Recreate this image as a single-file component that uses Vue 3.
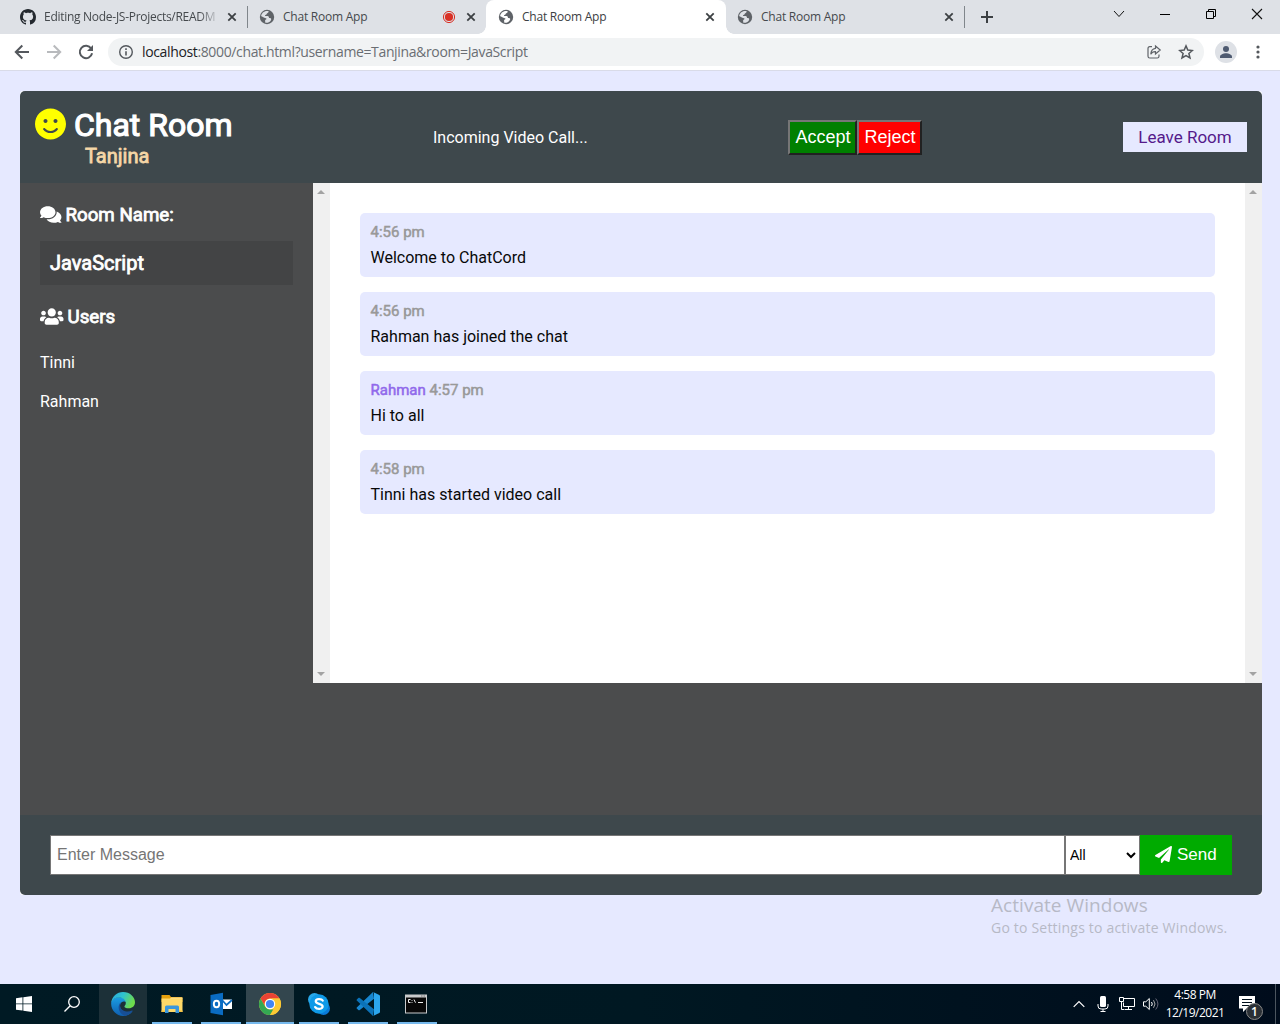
<script setup>
const tabs = [
  { title: 'Editing Node-JS-Projects/READM', icon: 'github', width: 248, cut: true },
  { title: 'Chat Room App', icon: 'globe', recording: true, width: 238 },
  { title: 'Chat Room App', icon: 'globe', active: true, width: 240 },
  { title: 'Chat Room App', icon: 'globe', width: 239 },
]
const messages = [
  { time: '4:56 pm', text: 'Welcome to ChatCord' },
  { time: '4:56 pm', text: 'Rahman has joined the chat' },
  { user: 'Rahman', time: '4:57 pm', text: 'Hi to all' },
  { time: '4:58 pm', text: 'Tinni has started video call' },
]
const users = ['Tinni', 'Rahman']
const apps = ['edge', 'files', 'outlook', 'chrome', 'skype', 'code', 'cmd']
</script>

<template>
  <div class="screen">
    <div class="tabstrip">
      <div class="tabs">
        <div v-for="(t, i) in tabs" :key="i" class="tab" :class="{ active: t.active, first: i === 0, sep: i === 0 || i === 3 }" :style="{ width: t.width + 'px' }">
          <svg v-if="t.icon === 'github'" class="favicon" viewBox="0 0 16 16"><path fill="#24292f" d="M8 0C3.58 0 0 3.58 0 8c0 3.54 2.29 6.53 5.47 7.59.4.07.55-.17.55-.38 0-.19-.01-.82-.01-1.49-2.01.37-2.53-.49-2.69-.94-.09-.23-.48-.94-.82-1.13-.28-.15-.68-.52-.01-.53.63-.01 1.08.58 1.23.82.72 1.21 1.87.87 2.33.66.07-.52.28-.87.51-1.07-1.78-.2-3.64-.89-3.64-3.95 0-.87.31-1.59.82-2.15-.08-.2-.36-1.02.08-2.12 0 0 .67-.21 2.2.82.64-.18 1.32-.27 2-.27s1.36.09 2 .27c1.53-1.04 2.2-.82 2.2-.82.44 1.1.16 1.92.08 2.12.51.56.82 1.27.82 2.15 0 3.07-1.87 3.75-3.65 3.95.29.25.54.73.54 1.48 0 1.07-.01 1.93-.01 2.2 0 .21.15.46.55.38A8.01 8.01 0 0 0 16 8c0-4.42-3.58-8-8-8z"/></svg>
          <svg v-else class="favicon" viewBox="0 0 16 16"><circle cx="8" cy="8" r="7.2" fill="#5f6368"/><path :fill="t.active ? '#fff' : '#dee1e6'" d="M9.4 2.1C10 3 9.3 4 8.3 4.2c-.6.1-.5.9-.9 1.3-.6.5-1.5.3-1.4 1 .1.8 1.400.5 2.600.6 1.200.1 1.400 1 1.400 1.900 1 .2 2.100-.1 2.200.9.1 1.100-.8 2.300-2 3-1.500.9-3 1.100-4 .7.1-1-.2-1.600-.1-2.300.1-.8 1.500-.7 1.400-1.600C7.300 8.700 5 9 3.800 7.900 3 7.200 2.600 7.200 2.100 7.300 2.400 4.300 5.100 1.500 9.400 2.100z"/></svg>
          <span class="tab-title" :class="{ cut: t.cut }">{{ t.title }}</span>
          <svg v-if="t.recording" class="rec" viewBox="0 0 14 14"><circle cx="7" cy="7" r="5.6" fill="none" stroke="#d93025"/><circle cx="7" cy="7" r="4.100" fill="#d93025"/></svg>
          <svg class="tab-close" viewBox="0 0 10 10"><path d="M1.300 1.300l7.400 7.400M8.700 1.300L1.300 8.700" stroke="#3c4043" stroke-width="1.800"/></svg>
        </div>
        <svg class="plus" viewBox="0 0 12 12"><path d="M6 0v12M0 6h12" stroke="#3c4043" stroke-width="2"/></svg>
      </div>
      <div class="win">
        <svg viewBox="0 0 12 12"><path d="M1 3l5 5.500L11 3" fill="none" stroke="#111"/></svg>
        <svg viewBox="0 0 12 12"><path d="M1 6.500h10" stroke="#000"/></svg>
        <svg viewBox="0 0 12 12"><path d="M1.500 3.500h7v7h-7zM3.500 3.500v-2h7v7h-2" fill="none" stroke="#000"/></svg>
        <svg viewBox="0 0 12 12"><path d="M1 1l10 10M11 1L1 11" stroke="#111" stroke-width="1.100"/></svg>
      </div>
    </div>

    <div class="toolbar">
      <svg class="nav" viewBox="0 0 16 16" fill="none" stroke="#54585d" stroke-width="2"><path d="M15 8H2M8.300 1.500L1.800 8l6.500 6.500"/></svg>
      <svg class="nav" viewBox="0 0 16 16" fill="none" stroke="#b8babd" stroke-width="2"><path d="M1 8h13M7.700 1.500L14.200 8l-6.500 6.500"/></svg>
      <svg class="nav" viewBox="0 0 16 16"><path d="M13.200 4.500A6.200 6.200 0 1 0 14.100 9.300" fill="none" stroke="#54585d" stroke-width="2"/><path d="M15 1v6H9z" fill="#54585d"/></svg>
      <div class="omnibox">
        <svg class="info" viewBox="0 0 16 16"><circle cx="8" cy="8" r="6.300" fill="none" stroke="#54585d" stroke-width="1.400"/><path d="M8 7.200v4.300M8 4.300v1.600" stroke="#54585d" stroke-width="1.600"/></svg>
        <span class="url"><b>localhost</b>:8000/chat.html?username=Tanjina&amp;room=JavaScript</span>
        <svg class="share" viewBox="0 0 16 16" fill="none" stroke="#5f6368" stroke-width="1.200"><path d="M6 2.600H3.800Q2 2.600 2 4.400v7.800Q2 14 3.800 14h7.400q1.800 0 1.800-1.800V10.500"/><path d="M9.500 2l4.700 4-4.700 4V7.700Q6.300 7.500 4.800 10.300 5 4.900 9.500 4.300z"/></svg>
        <svg class="star" viewBox="0 0 16 16" fill="none" stroke="#54585d" stroke-width="1.500"><path d="M8 1.900l1.800 4.200 4.600.4-3.500 3 1.100 4.500L8 11.600 4 14l1.100-4.500-3.500-3 4.600-.4z"/></svg>
      </div>
      <svg class="avatar" viewBox="0 0 22 22"><circle cx="11" cy="11" r="11" fill="#dee1e6"/><circle cx="11" cy="8" r="3" fill="#4e5a70"/><path d="M5 17v-1.500c0-2 3.500-3.300 6-3.300s6 1.300 6 3.300V17z" fill="#4e5a70"/></svg>
      <svg class="dots" viewBox="0 0 4 16" fill="#54585d"><circle cx="2" cy="3" r="1.600"/><circle cx="2" cy="8" r="1.600"/><circle cx="2" cy="13" r="1.600"/></svg>
    </div>

    <div class="page">
      <div class="chat-container">
        <header class="chat-header">
          <div class="brand">
            <h1><svg viewBox="0 0 496 512"><path fill="#ff0" d="M248 8C111 8 0 119 0 256s111 248 248 248 248-111 248-248S385 8 248 8zm80 168c17.700 0 32 14.300 32 32s-14.300 32-32 32-32-14.300-32-32 14.300-32 32-32zm-160 0c17.700 0 32 14.300 32 32s-14.300 32-32 32-32-14.300-32-32 14.300-32 32-32zm194.800 170.200C334.300 380.400 292.500 400 248 400s-86.300-19.600-114.800-53.800c-13.600-16.300 11-36.700 24.600-20.500 22.400 26.900 55.200 42.200 90.200 42.200s67.800-15.400 90.200-42.200c13.400-16.200 38.100 4.200 24.600 20.500z"/></svg><span>Chat Room</span></h1>
            <h3>Tanjina</h3>
          </div>
          <p class="incoming">Incoming Video Call...</p>
          <div class="call-buttons"><button class="accept">Accept</button><button class="reject">Reject</button></div>
          <a class="leave">Leave Room</a>
        </header>

        <main class="chat-main">
          <aside class="sidebar">
            <h3 class="room-label"><svg class="comments" viewBox="0 0 576 512"><path fill="#fff" d="M416 192c0-88.400-93.100-160-208-160S0 103.600 0 192c0 34.300 14.100 65.900 38 92-13.400 30.200-35.500 54.200-35.800 54.500-2.200 2.300-2.800 5.700-1.500 8.700S4.800 352 8 352c36.600 0 66.900-12.300 88.700-25 32.200 15.700 70.300 25 111.300 25 114.900 0 208-71.600 208-160zm122 220c23.900-26 38-57.700 38-92 0-66.900-53.500-124.200-129.300-148.100.9 6.600 1.300 13.300 1.300 20.100 0 105.900-107.700 192-240 192-10.800 0-21.300-.8-31.700-1.900C207.800 439.600 281.800 480 368 480c41 0 79.100-9.200 111.300-25 21.800 12.700 52.100 25 88.700 25 3.200 0 6.100-1.900 7.300-4.800 1.300-2.900.7-6.300-1.500-8.700-.3-.3-22.400-24.200-35.800-54.500z"/></svg><span>Room Name:</span></h3>
            <h2>JavaScript</h2>
            <h3 class="users-label"><svg class="people" viewBox="0 0 640 512"><path fill="#fff" d="M96 224c35.300 0 64-28.700 64-64s-28.700-64-64-64-64 28.700-64 64 28.700 64 64 64zm448 0c35.300 0 64-28.700 64-64s-28.700-64-64-64-64 28.700-64 64 28.700 64 64 64zm32 32h-64c-17.600 0-33.500 7.100-45.100 18.600 40.300 22.100 68.900 62 75.100 109.400h66c17.700 0 32-14.300 32-32v-32c0-35.300-28.700-64-64-64zm-256 0c61.900 0 112-50.100 112-112S381.900 32 320 32 208 82.100 208 144s50.100 112 112 112zm76.800 32h-8.300c-20.800 10-43.900 16-68.500 16s-47.600-6-68.500-16h-8.300C179.600 288 128 339.600 128 403.200V432c0 26.500 21.500 48 48 48h288c26.500 0 48-21.500 48-48v-28.800c0-63.600-51.600-115.200-115.200-115.200zm-223.700-13.400C161.500 263.100 145.600 256 128 256H64c-35.300 0-64 28.700-64 64v32c0 17.700 14.300 32 32 32h65.900c6.300-47.400 34.900-87.300 75.200-109.400z"/></svg><span>Users</span></h3>
            <ul><li v-for="u in users" :key="u">{{ u }}</li></ul>
          </aside>
          <section class="chat-view">
            <div class="scrollbar"><i class="up"></i><i class="down"></i></div>
            <div class="messages">
              <div v-for="(m, i) in messages" :key="i" class="message">
                <p class="meta"><span v-if="m.user" class="author">{{ m.user }}</span> <span>{{ m.time }}</span></p>
                <p class="text">{{ m.text }}</p>
              </div>
            </div>
            <div class="scrollbar"><i class="up"></i><i class="down"></i></div>
          </section>
        </main>

        <form class="chat-form" @submit.prevent>
          <input type="text" placeholder="Enter Message">
          <select><option>All</option></select>
          <button class="send"><svg viewBox="0 0 512 512"><path fill="#fff" d="M476 3.200L12.500 270.600c-18.100 10.400-15.800 35.600 2.200 43.200L121 358.400l287.300-253.200c5.500-4.900 13.300 2.600 8.600 8.300L176 407v80.500c0 23.600 28.500 32.900 42.500 15.800L282 426l124.600 52.200c14.200 6 30.400-2.900 33-18.200l72-432C515 7.800 493.300-6.800 476 3.200z"/></svg><span>Send</span></button>
        </form>
      </div>
      <div class="watermark">
        <p class="wm-title">Activate Windows</p>
        <p class="wm-sub">Go to Settings to activate Windows.</p>
      </div>
    </div>

    <footer class="taskbar">
      <div class="start"><svg viewBox="0 0 16 16" fill="#fff"><path d="M0 2.200L6.500 1.300v6.200H0zM7.300 1.200L16 0v7.500H7.300zM0 8.300h6.500v6.300L0 13.700zM7.300 8.300H16V16l-8.700-1.200z"/></svg></div>
      <div class="search"><svg viewBox="0 0 16 16" fill="none" stroke="#fff" stroke-width="1.300"><circle cx="10" cy="6" r="5.300"/><path d="M6.200 9.800L.5 15.500"/></svg></div>
      <div v-for="a in apps" :key="a" class="app" :class="a">
        <svg v-if="a === 'edge'" viewBox="0 0 24 24">
          <defs>
            <linearGradient id="eg1" x1="0" y1="0" x2="1" y2=".4"><stop offset="0" stop-color="#2aa7e0"/><stop offset=".5" stop-color="#2fc3cf"/><stop offset="1" stop-color="#6edb4c"/></linearGradient>
            <linearGradient id="eg2" x1="0" y1="0" x2="0" y2="1"><stop offset="0" stop-color="#1b9de2"/><stop offset="1" stop-color="#0f5fb0"/></linearGradient>
          </defs>
          <path fill="url(#eg2)" d="M.3 10C1.500 7 5 5 9 5.200c4 .2 6.500 2.500 6.800 5.300C14 8.600 9 9.500 9 14c0 5 6 7.500 12.500 5.200C19.500 22.200 16 24 12 24 5 24-.8 17.500.3 10z"/>
          <path fill="#174f96" d="M10 10.200C6 13 7 21 13.500 23.800c3.500-.4 6.300-2.200 8.100-4.700.3-.5-.1-.7-.6-.5-5 2.200-11 .4-11.800-4.200-.2-1.500.1-3 .8-4.200z"/>
          <path fill="url(#eg1)" d="M.3 10.400C1 4.300 6 0 12 0c7 0 12 5 12 10.200 0 3.800-2.700 6-6.200 6-2.800 0-4.400-.9-4.400-1.800 0-.7 1.400-1.100 1.400-3.400C14.800 7.900 12 5.500 8.200 5.500 4.500 5.500 1.500 7.500.3 10.400z"/>
        </svg>
        <svg v-else-if="a === 'files'" viewBox="0 0 24 24"><path fill="#e5a00d" d="M1.500 3h8l1.500 2h10.500q1 0 1 1v4h-21z"/><path fill="#ffd968" d="M1.500 6.500h21V20h-21z"/><path fill="#ffe699" d="M11 5.500h11.500v1.300H10z"/><path fill="#3a97dc" d="M5 21v-6q0-1.500 1.500-1.500h11q1.500 0 1.500 1.500v6h-3.500v-4h-7v4z"/><path fill="#f6c343" d="M1.500 18.500H5V20H1.500zM19 18.500h3.500V20H19z"/></svg>
        <svg v-else-if="a === 'outlook'" viewBox="0 0 24 24"><path fill="#fff" d="M13 7.500h10V17H13z"/><path d="M13.500 8.500l4 4.500L23 8" fill="none" stroke="#0a6cc2" stroke-width="1.700"/><path fill="#0a6cc2" d="M1.500 3L14 .8v22.400L1.500 21z"/><ellipse cx="7.500" cy="12" rx="2.700" ry="3.300" fill="none" stroke="#fff" stroke-width="1.900"/></svg>
        <svg v-else-if="a === 'chrome'" viewBox="0 0 24 24"><circle cx="12" cy="12" r="11" fill="#fcc934"/><path fill="#ea4335" d="M2.500 6.500A11 11 0 0 1 21.500 6.500H12A5.500 5.500 0 0 0 7.240 14.750z"/><path fill="#34a853" d="M2.470 6.500L7.240 14.750A5.500 5.500 0 0 0 12 17.500h4.760L12 23A11 11 0 0 1 2.470 6.500z"/><path fill="#fcc934" d="M21.530 6.500A11 11 0 0 1 12 23l4.760-8.250A5.500 5.500 0 0 0 12 6.500z"/><circle cx="12" cy="12" r="5.200" fill="#fff"/><circle cx="12" cy="12" r="4.100" fill="#4285f4"/></svg>
        <svg v-else-if="a === 'skype'" viewBox="0 0 24 24"><circle cx="7.500" cy="7.500" r="6.500" fill="#28a8ea"/><circle cx="16.500" cy="16.500" r="6.500" fill="#0a7bd8"/><circle cx="12" cy="12" r="9.700" fill="#0f9ae8"/><path d="M15.700 8.500C14.500 6.600 8.700 6.400 8.800 9.400c.1 3 6.700 1.900 6.800 5 .1 3.200-6 3-7.400.7" fill="none" stroke="#fff" stroke-width="2.300" stroke-linecap="round"/></svg>
        <svg v-else-if="a === 'code'" viewBox="0 0 24 24"><path fill="#1786cf" d="M17 0L1 15.200c-.6.600-.5 1.100 0 1.600l1.300 1.200c.5.400 1 .4 1.500 0L18 6.800z"/><path fill="#0b72b8" d="M17 24L1 8.800C.4 8.200.5 7.700 1 7.200L2.300 6c.5-.4 1-.4 1.500 0L18 17.200z"/><path fill="#2ba6ee" d="M17 0l6.300 3q.7.400.7 1.200v15.600q0 .8-.7 1.200L17 24q1-.6 1-1.500v-21Q18 .6 17 0z"/></svg>
        <svg v-else viewBox="0 0 24 24"><path fill="#c8cacc" d="M1 2.500h22v19H1z"/><path fill="#080808" d="M2 5.500h20v15H2z"/><path fill="#777" d="M17 3.500h1.500v1H17zM19.500 3.500H21v1h-1.500z"/><path d="M6.500 7.500H4.500v3h2M8 8v.8M8 10v.8M10 7.500l1.500 3.200M14 10.500h5" stroke="#eee" fill="none"/></svg>
      </div>
      <div class="tray">
        <svg class="caret" viewBox="0 0 12 8"><path d="M.7 6.800L6 1.500l5.300 5.300" fill="none" stroke="#fff" stroke-width="1.200"/></svg>
        <svg class="mic" viewBox="0 0 12 16"><rect x="3" y="0" width="6" height="11" rx="1.500" fill="#fff"/><path d="M1 8v2q0 3 3 3h4q3 0 3-3V8M6 13v2.500M3.500 15.500h5" stroke="#fff" fill="none"/></svg>
        <svg class="net" viewBox="0 0 16 14"><path d="M5 1.500h10.500v8H4.500v-4M9.500 9.500v3M6 12.500h7M.5.500h4v4h-4zM2.500 4.500v8h3" fill="none" stroke="#fff"/></svg>
        <svg class="vol" viewBox="0 0 16 14"><path d="M.5 4.800h2.300L6.300 1.500v11L2.800 9.200H.5z" fill="none" stroke="#fff"/><path d="M8.500 5q1.500 2 0 4" fill="none" stroke="#fff"/><path d="M10.500 3.200q3 3.800 0 7.600" fill="none" stroke="#aaa"/><path d="M12.700 1.500q4.500 5.500 0 11" fill="none" stroke="#667"/></svg>
        <div class="clock"><span class="time">4:58 PM</span><span class="date">12/19/2021</span></div>
        <div class="notify"><svg viewBox="0 0 16 16"><path fill="#fff" d="M0 0h16v12.500h-8.500L4 16v-3.500H0z"/><path d="M3 3.500h10M3 6.500h10M3 9.500h7" stroke="#000f1c"/></svg><em>1</em></div>
        <i class="edge-line"></i>
      </div>
    </footer>
  </div>
</template>

<style>
body { margin: 0; overflow: hidden; }
</style>

<style scoped>
* { box-sizing: border-box; }
p, h1, h2, h3, ul { margin: 0; padding: 0; }
svg { display: block; flex: none; }
.screen { width: 1280px; height: 1024px; display: flex; flex-direction: column; font-family: "Open Sans", sans-serif; overflow: hidden; }

.tabstrip { height: 34px; flex: none; background: #dee1e6; display: flex; justify-content: space-between; }
.tabs { display: flex; align-items: stretch; }
.tab { position: relative; display: flex; align-items: center; padding: 0 10px 0 11px; font-size: 12px; color: #45494d; }
.tab.first { padding-left: 20px; }
.tab.active { padding: 0 11px 0 12px; background: #fff; border-radius: 8px 8px 0 0; color: #3c4043; }
.tab.active::before, .tab.active::after { content: ""; position: absolute; bottom: 0; width: 8px; height: 8px; }
.tab.active::before { left: -8px; background: radial-gradient(circle at 0 0, #dee1e6 7.5px, #fff 8px); }
.tab.active::after { right: -8px; background: radial-gradient(circle at 100% 0, #dee1e6 7.5px, #fff 8px); }
.tab.sep { border-right: 1px solid transparent; border-image: linear-gradient(#0000 7px, #80868b 7px, #80868b 27px, #0000 27px) 1; }
.favicon { width: 16px; height: 16px; margin-right: 8px; }
.tab-title { flex: 1; white-space: nowrap; padding-bottom: 1px; letter-spacing: -.23px; }
.tab-title.cut { margin-right: 7px; letter-spacing: -.28px; -webkit-mask-image: linear-gradient(90deg, #000 88%, transparent); mask-image: linear-gradient(90deg, #000 88%, transparent); }
.rec { width: 14px; height: 14px; margin-right: 10px; }
.tab-close { width: 10px; height: 10px; }
.plus { width: 12px; height: 12px; align-self: center; margin-left: 16px; }
.win { display: flex; gap: 34px; padding: 8px 17px 0 0; }
.win svg { width: 12px; height: 12px; }

.toolbar { height: 37px; flex: none; background: #fff; border-bottom: 1px solid #d9dbe8; display: flex; align-items: center; padding-left: 14px; }
.nav { width: 16px; height: 16px; margin-right: 16px; }
.omnibox { width: 1096px; height: 28px; margin-left: -2px; background: #f1f3f4; border-radius: 14px; display: flex; align-items: center; padding: 0 10px; }
.info { width: 16px; height: 16px; }
.url { flex: 1; margin-left: 8px; padding-bottom: 1px; font-size: 14px; color: #6a6e73; letter-spacing: -.36px; white-space: nowrap; }
.url b { font-weight: 400; color: #202124; }
.share, .star { width: 16px; height: 16px; }
.star { margin-left: 16px; }
.avatar { width: 22px; height: 22px; margin-left: 11px; }
.dots { width: 4px; height: 16px; margin-left: 19px; }

.page { height: 913px; flex: none; background: #e6e9ff; padding: 20px 18px 0 20px; font-family: Roboto, sans-serif; }
.chat-container { height: 804px; background: #fff; border-radius: 3px; display: flex; flex-direction: column; }
.chat-header { height: 92px; background: #3e484c; border-radius: 5px 5px 0 0; padding: 15px; display: flex; align-items: center; color: #fff; }
.brand { width: 398px; height: 62px; }
h1, h2, h3 { font-weight: 400; -webkit-text-stroke: .8px currentColor; }
h1 { display: flex; font-size: 32px; line-height: 38px; height: 37px; -webkit-text-stroke-width: 1.2px; }
h1 svg { width: 31px; height: 32px; margin: 2px 8px 0 0; }
h1 span { white-space: nowrap; }
.brand h3 { margin-left: 50px; font-size: 20px; line-height: 26px; color: #f5d7a7; }
.incoming { width: 355px; font-size: 16px; }
.call-buttons { display: flex; width: 335px; }
.call-buttons button { height: 35px; padding: 0 0 0 1px; border: 2px outset #767676; color: #fff; font: 18px "Liberation Sans", Arial, sans-serif; }
.call-buttons .accept { width: 69px; background: #008000; }
.call-buttons .reject { width: 65px; background: #f00; }
.leave { width: 124px; height: 30px; background: #e6e9ff; color: #551a8b; font-size: 17px; line-height: 30px; text-align: center; white-space: nowrap; }

.chat-main { height: 632px; background: #4b4c4d; display: flex; align-items: flex-start; }
.sidebar { width: 293px; padding: 20px; color: #fff; }
.sidebar h3 { display: flex; align-items: center; font-size: 18.72px; line-height: 22px; height: 22px; }
.sidebar .room-label span { padding-top: 1px; }
.comments { width: 21.500px; height: 19px; margin-right: 4px; }
.people { width: 23.500px; height: 19px; margin: -1px 4px 0 0; }
.sidebar h2 { height: 44px; margin: 16px 0 21px; padding: 0 10px; background: #434445; font-size: 20px; line-height: 44px; }
.sidebar ul { list-style: none; padding-top: 15px; }
.sidebar li { font-size: 16px; line-height: 39px; height: 39px; }
.chat-view { width: 949px; height: 500px; background: #fff; display: flex; }
.scrollbar { width: 17px; background: #f0f0f0; display: flex; flex-direction: column; justify-content: space-between; align-items: center; padding: 7px 1px 7px 0; }
.scrollbar i { border: 4px solid transparent; border-top-width: 0; border-bottom: 4px solid #a3a3a3; }
.scrollbar .down { border-bottom-width: 0; border-top: 4px solid #a3a3a3; }
.messages { flex: 1; padding: 30px; display: flex; flex-direction: column; gap: 15px; }
.message { height: 64px; background: #e6e9ff; border-radius: 5px; padding: 10px 10px 10px 10.500px; }
.meta { font-size: 15px; line-height: 18px; color: #999; -webkit-text-stroke: .5px currentColor; }
.author { color: #9069eb; }
.text { font-size: 16px; line-height: 18px; margin-top: 8px; color: #080808; }

.chat-form { height: 80px; padding: 20px 30px; background: #3e484c; border-radius: 0 0 5px 5px; display: flex; }
.chat-form input { width: 1015px; height: 40px; border: 1px solid #767676; border-radius: 0; padding: 0 6px; outline: none; font: 16px "Liberation Sans", Arial, sans-serif; }
.chat-form input::placeholder { color: #757575; }
.chat-form select { width: 74.500px; height: 40px; border: 1px solid #767676; border-radius: 0; background: #fff; color: #000; font: 14px "Liberation Sans", Arial, sans-serif; padding: 0; }
.send { width: 92.500px; height: 40px; border: 0; padding: 0; background: #00ab00; color: #fff; font: 17px "Liberation Sans", Arial, sans-serif; display: flex; align-items: center; justify-content: center; gap: 5px; }
.send svg { width: 17px; height: 17px; margin-bottom: 1px; }

.watermark { margin: -1px 0 0 971px; color: #b7b9c6; font-family: "Open Sans", sans-serif; white-space: nowrap; }
.wm-title { font-size: 19px; line-height: 22px; letter-spacing: .05px; }
.wm-sub { font-size: 14px; line-height: 23px; letter-spacing: .2px; }

.taskbar { height: 40px; flex: none; background: linear-gradient(90deg, #001a24, #001822 50%, #000c1c); display: flex; color: #fff; }
.start { width: 48px; display: flex; align-items: center; justify-content: center; }
.search { width: 51px; padding-left: 16px; display: flex; align-items: center; }
.start svg, .search svg { width: 16px; height: 16px; }
.app { width: 48px; margin-right: 1px; position: relative; display: flex; align-items: center; justify-content: center; }
.app svg { width: 24px; height: 24px; }
.app.cmd svg { margin-right: 2px; }
.app::after { content: ""; position: absolute; left: 4px; right: 4px; bottom: 0; height: 2px; background: #76b9ed; }
.app.edge { background: #1c3038; }
.app.edge::after { display: none; }
.app.chrome { background: #33464e; }
.app.chrome::after { left: 0; right: 0; }
.tray { margin-left: auto; display: flex; align-items: center; }
.caret { width: 12px; height: 8px; margin-right: 12px; }
.mic { width: 12px; height: 16px; margin-right: 10px; }
.net { width: 16px; height: 14px; margin-right: 8px; }
.vol { width: 16px; height: 14px; margin-right: 7px; }
.clock { width: 58px; display: flex; flex-direction: column; align-items: center; font-size: 12px; line-height: 18px; letter-spacing: -.5px; white-space: nowrap; }
.notify { position: relative; margin-left: 15px; width: 36px; }
.notify svg { width: 16px; height: 16px; }
.notify em { position: absolute; left: 7px; top: 7px; width: 17px; height: 17px; border: 1px solid #888; border-radius: 50%; background: #2b3036; font-style: normal; font-size: 12px; font-weight: 600; line-height: 15px; text-align: center; }
.edge-line { width: 1px; height: 40px; background: #4b555f; margin-right: 4px; }
</style>
